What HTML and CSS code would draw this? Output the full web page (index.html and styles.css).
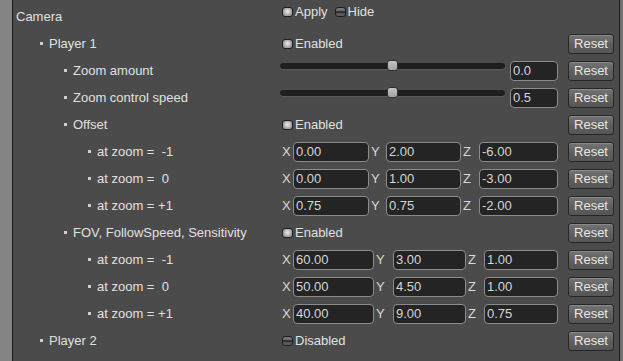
FILE: index.html
```html
<!DOCTYPE html>
<html>
<head>
<meta charset="utf-8">
<link rel="stylesheet" href="styles.css">
</head>
<body>
<div class="frame">
  <div class="gutter"></div>
  <div class="panel">
    <div class="row">
      <div class="label lv0">Camera</div>
      <div class="ctrl raised">
        <span class="toggle on">Apply</span>
        <span class="toggle off hide">Hide</span>
      </div>
    </div>
    <div class="row">
      <div class="label lv1 bul">Player 1</div>
      <div class="ctrl">
        <span class="toggle on">Enabled</span>
        <button class="reset">Reset</button>
      </div>
    </div>
    <div class="row">
      <div class="label lv2 bul">Zoom amount</div>
      <div class="ctrl">
        <div class="slider"><div class="track"></div><div class="thumb"></div></div>
        <div class="field num">0.0</div>
        <button class="reset">Reset</button>
      </div>
    </div>
    <div class="row">
      <div class="label lv2 bul">Zoom control speed</div>
      <div class="ctrl">
        <div class="slider"><div class="track"></div><div class="thumb"></div></div>
        <div class="field num">0.5</div>
        <button class="reset">Reset</button>
      </div>
    </div>
    <div class="row">
      <div class="label lv2 bul">Offset</div>
      <div class="ctrl">
        <span class="toggle on">Enabled</span>
        <button class="reset">Reset</button>
      </div>
    </div>
    <div class="row">
      <div class="label lv3 bul">at zoom = &nbsp;-1</div>
      <div class="ctrl">
        <div class="vec offset"><span class="ax">X</span><div class="field">0.00</div><span class="ax">Y</span><div class="field">2.00</div><span class="ax">Z</span><div class="field">-6.00</div></div>
        <button class="reset">Reset</button>
      </div>
    </div>
    <div class="row">
      <div class="label lv3 bul">at zoom = &nbsp;0</div>
      <div class="ctrl">
        <div class="vec offset"><span class="ax">X</span><div class="field">0.00</div><span class="ax">Y</span><div class="field">1.00</div><span class="ax">Z</span><div class="field">-3.00</div></div>
        <button class="reset">Reset</button>
      </div>
    </div>
    <div class="row">
      <div class="label lv3 bul">at zoom = +1</div>
      <div class="ctrl">
        <div class="vec offset"><span class="ax">X</span><div class="field">0.75</div><span class="ax">Y</span><div class="field">0.75</div><span class="ax">Z</span><div class="field">-2.00</div></div>
        <button class="reset">Reset</button>
      </div>
    </div>
    <div class="row">
      <div class="label lv2 bul">FOV, FollowSpeed, Sensitivity</div>
      <div class="ctrl">
        <span class="toggle on">Enabled</span>
        <button class="reset">Reset</button>
      </div>
    </div>
    <div class="row">
      <div class="label lv3 bul">at zoom = &nbsp;-1</div>
      <div class="ctrl">
        <div class="vec fov"><span class="ax">X</span><div class="field">60.00</div><span class="ax">Y</span><div class="field">3.00</div><span class="ax">Z</span><div class="field">1.00</div></div>
        <button class="reset">Reset</button>
      </div>
    </div>
    <div class="row">
      <div class="label lv3 bul">at zoom = &nbsp;0</div>
      <div class="ctrl">
        <div class="vec fov"><span class="ax">X</span><div class="field">50.00</div><span class="ax">Y</span><div class="field">4.50</div><span class="ax">Z</span><div class="field">1.00</div></div>
        <button class="reset">Reset</button>
      </div>
    </div>
    <div class="row">
      <div class="label lv3 bul">at zoom = +1</div>
      <div class="ctrl">
        <div class="vec fov"><span class="ax">X</span><div class="field">40.00</div><span class="ax">Y</span><div class="field">9.00</div><span class="ax">Z</span><div class="field">0.75</div></div>
        <button class="reset">Reset</button>
      </div>
    </div>
    <div class="row">
      <div class="label lv1 bul">Player 2</div>
      <div class="ctrl">
        <span class="toggle off">Disabled</span>
        <button class="reset">Reset</button>
      </div>
    </div>
  </div>
  <div class="rim"></div>
</div>
</body>
</html>
```

FILE: styles.css
```css
html, body {
  margin: 0;
  padding: 0;
  width: 623px;
  height: 361px;
  overflow: hidden;
  background: #4b4b4b;
}

.frame {
  display: flex;
  height: 361px;
  font-family: "Liberation Sans", Arial, sans-serif;
  font-size: 13px;
  color: #e0e0e0;
}

.gutter {
  width: 12px;
  background: #848484;
  border-right: 1px solid #1c1c1c;
}

.panel {
  width: 606px;
  padding-top: 3px;
  background: #4b4b4b;
  border-right: 1px solid #1c1c1c;
}

.rim {
  flex: 1;
  background: #707070;
}

.row {
  display: flex;
  align-items: center;
  height: 27px;
}

.label {
  width: 267px;
  box-sizing: border-box;
  white-space: nowrap;
}

.lv0 { padding-left: 3px; }
.lv1 { padding-left: 27px; }
.lv2 { padding-left: 51px; }
.lv3 { padding-left: 75px; }

.bul::before {
  content: "";
  display: inline-block;
  width: 3px;
  height: 3px;
  background: #cfcfcf;
  margin-right: 6px;
  vertical-align: 3px;
}

.ctrl {
  flex: 1;
  display: flex;
  align-items: center;
  height: 27px;
}

.ctrl.raised {
  padding-bottom: 10px;
  box-sizing: border-box;
}

.toggle {
  display: inline-flex;
  align-items: center;
  margin-left: 2px;
  line-height: 15px;
}

.toggle::before {
  content: "";
  display: inline-block;
  box-sizing: border-box;
  width: 11px;
  height: 10px;
  border: 1px solid #1e1e1e;
  border-radius: 3px;
  margin-right: 2px;
}

.toggle.on::before {
  background: radial-gradient(ellipse at 50% 45%, #e4e4e4 0, #cfcfcf 2px, #a8a8a8 3.5px, #8c8c8c 6px);
}

.toggle.off::before {
  background: linear-gradient(#7a7a7a 0, #6a6a6a 35%, #2e2e2e 45%, #2e2e2e 60%, #5c5c5c 70%, #5a5a5a 100%);
}

.toggle.hide {
  margin-left: 7px;
}

.reset {
  margin-left: auto;
  margin-right: 5px;
  width: 46px;
  height: 20px;
  padding: 0;
  box-sizing: border-box;
  border: 1px solid #262626;
  border-radius: 3px;
  background: linear-gradient(#747474, #5e5e5e 55%, #565656);
  box-shadow: inset 0 1px 0 #8a8a8a;
  font-family: "Liberation Sans", Arial, sans-serif;
  font-size: 13px;
  color: #e6e6e6;
  line-height: 17px;
}

.slider {
  position: relative;
  width: 225px;
  height: 27px;
}

.track {
  position: absolute;
  left: 0;
  right: 0;
  top: 6px;
  height: 6px;
  border-radius: 3px;
  background: #1f1f1f;
  box-shadow: 0 1px 0 #5a5a5a;
}

.thumb {
  position: absolute;
  left: 107px;
  top: 3px;
  width: 11px;
  height: 11px;
  box-sizing: border-box;
  border: 1px solid #333;
  border-radius: 3px;
  background: linear-gradient(#c4c4c4, #a2a2a2);
}

.field {
  box-sizing: border-box;
  height: 20px;
  padding-left: 2px;
  border: 1px solid #8c8c8c;
  border-radius: 4px;
  background: #242424;
  color: #d6d6d6;
  line-height: 18px;
  white-space: nowrap;
  overflow: hidden;
}

.field.num {
  width: 48px;
  margin-left: 5px;
}

.vec {
  display: grid;
  align-items: center;
}

.vec.offset {
  grid-template-columns: 13px 76px 17px 75px 18px 79px;
}

.vec.fov {
  grid-template-columns: 13px 81px 19px 73px 18px 74px;
}

.ax {
  padding-left: 2px;
  color: #d8d8d8;
}
```
